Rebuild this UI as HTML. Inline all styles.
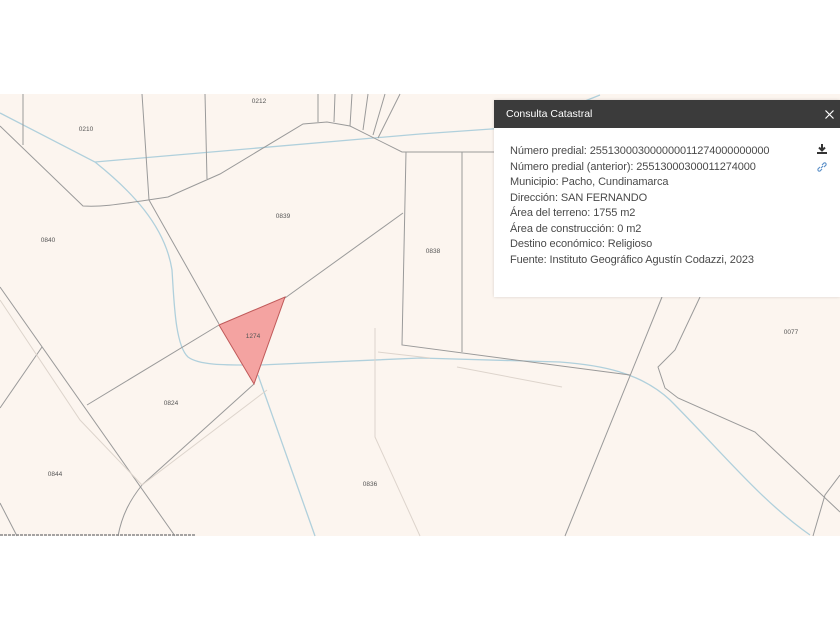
<!DOCTYPE html>
<html><head><meta charset="utf-8"><style>
body{margin:0;width:840px;height:630px;background:#fff;position:relative;overflow:hidden;font-family:"Liberation Sans","DejaVu Sans",sans-serif}
svg{position:absolute;left:0;top:0}
.p{position:absolute;left:494px;top:100px;width:346px;height:197px;background:#fff;box-shadow:0 0 3px rgba(0,0,0,.15)}
.h{height:28px;background:#3b3b3b;color:#fff;font-size:10.5px;line-height:29px;padding-left:12px;position:relative}
.b{position:absolute;left:16px;top:44px;font-size:11px;color:#4a4a4a;line-height:15.5px;letter-spacing:-0.1px}
</style></head><body>
<svg width="840" height="630">
<rect x="0" y="94" width="840" height="442" fill="#fcf5ef"/>
<g fill="none" stroke="#b0d0dc" stroke-width="1.3">
<path d="M0 113 L95 162 C130 190 165 225 172 270 C174 300 175 345 188 357 C200 366 230 365 260 365 L420 358 L560 362 C600 365 640 372 670 400 C720 450 760 500 810 535"/>
<path d="M95 162 L420 134 L520 127 L600 95"/>
<path d="M258 375 L315 536"/>
</g>
<g fill="none" stroke="#9a9a9a" stroke-width="1">
<path d="M23 94 L23 145"/>
<path d="M0 126 L83 206 C100 207 115 205 148 200 L168 197 L220 174 L303 124 L327 122 L350 126 L402 152 L494 152"/>
<path d="M142 94 L149 200 L219 324"/>
<path d="M205 94 L207 179"/>
<path d="M318 94 L318 122 M335 94 L334 122 M352 94 L350 126 M368 94 L363 130 M385 94 L373 135 M400 94 L378 138"/>
<path d="M285 298 L403 213"/>
<path d="M406 152 L402 345 L630 375"/>
<path d="M462 152 L462 352"/>
<path d="M219 325 L87 405"/>
<path d="M254 384 L142 485 C130 500 122 515 118 536"/>
<path d="M0 287 L175 536"/>
<path d="M42 347 L0 408"/>
<path d="M0 503 L17 536"/>
<path d="M662 297 L565 536"/>
<path d="M700 297 L675 350 L658 367 L665 388 L678 398 L755 432 L840 512"/>
<path d="M840 475 L825 495 L813 536"/>
</g>
<g fill="none" stroke="#ddd4cc" stroke-width="1">
<path d="M0 300 L80 420 L142 485"/>
<path d="M267 390 L142 485"/>
<path d="M375 328 L375 437 L420 536"/>
<path d="M457 367 L562 387"/>
<path d="M378 352 L430 358"/>
</g>
<polygon points="219,325 285,297 254,384" fill="#f4a3a1" stroke="#c05a5a" stroke-width="1"/>
<g font-size="6.5" fill="#555" font-family="Liberation Sans,sans-serif" text-anchor="middle">
<text x="86" y="131">0210</text><text x="259" y="103">0212</text><text x="283" y="218">0839</text>
<text x="48" y="242">0840</text><text x="433" y="253">0838</text><text x="253" y="338">1274</text>
<text x="171" y="405">0824</text><text x="55" y="476">0844</text><text x="370" y="486">0836</text>
<text x="791" y="334">0077</text></g>
<line x1="0" y1="535" x2="195" y2="535" stroke="#888" stroke-width="1.5" stroke-dasharray="3 1"/>
</svg>
<div class="p"><div class="h">Consulta Catastral</div>
<svg style="left:331px;top:10px" width="9" height="9" viewBox="0 0 9 9"><path d="M0.5 0.5L8.5 8.5M8.5 0.5L0.5 8.5" stroke="#fff" stroke-width="1.2"/></svg>
<div class="b">Número predial: 255130003000000011274000000000<br>Número predial (anterior): 25513000300011274000<br>Municipio: Pacho, Cundinamarca<br>Dirección: SAN FERNANDO<br>Área del terreno: 1755 m2<br>Área de construcción: 0 m2<br>Destino económico: Religioso<br>Fuente: Instituto Geográfico Agustín Codazzi, 2023</div>
<svg style="left:322px;top:43px" width="12" height="12" viewBox="0 0 12 12"><path d="M6 1v6M3 4.5l3 3 3-3" stroke="#333" stroke-width="2" fill="none"/><rect x="1" y="9" width="10" height="2" fill="#333"/></svg>
<svg style="left:322px;top:61px" width="12" height="12" viewBox="0 0 12 12"><path d="M5 7l2-2M4 6l-2 2a1.5 1.5 0 0 0 2 2l2-2M8 6l2-2a1.5 1.5 0 0 0-2-2l-2 2" stroke="#5a8fc8" stroke-width="1.1" fill="none"/></svg>
</div>
</body></html>
